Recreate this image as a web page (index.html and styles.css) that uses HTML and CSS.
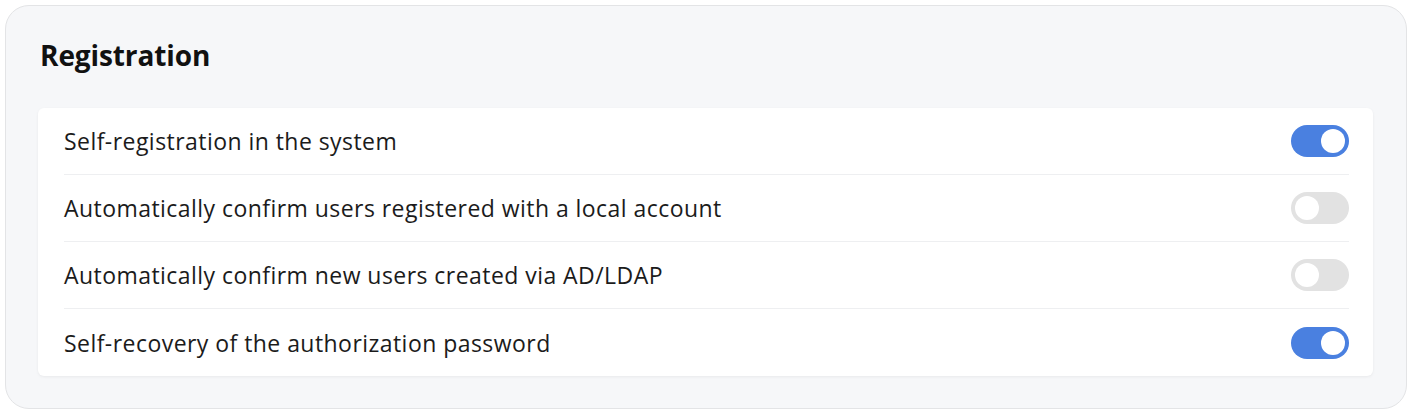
FILE: index.html
```html
<!DOCTYPE html>
<html>
<head>
<meta charset="utf-8">
<link rel="stylesheet" href="styles.css">
</head>
<body>
<section class="panel">
  <h2 class="panel-title">Registration</h2>
  <div class="list">
    <div class="row"><span class="label">Self-registration in the system</span><span class="toggle on"><span class="knob"></span></span></div>
    <div class="row"><span class="label">Automatically confirm users registered with a local account</span><span class="toggle"><span class="knob"></span></span></div>
    <div class="row"><span class="label">Automatically confirm new users created via AD/LDAP</span><span class="toggle"><span class="knob"></span></span></div>
    <div class="row"><span class="label">Self-recovery of the authorization password</span><span class="toggle on"><span class="knob"></span></span></div>
  </div>
</section>
</body>
</html>
```
FILE: styles.css
```css
html, body { margin: 0; padding: 0; background: #ffffff; }
body { padding: 5px; font-family: "Open Sans", "Noto Sans", sans-serif; color: #1b1b1b; }
.panel {
  box-sizing: border-box;
  width: 1402px;
  height: 404px;
  background: #f6f7f9;
  border: 1px solid #e3e4e6;
  border-radius: 24px;
  padding: 33px 33px 32px 32px;
  display: flex;
  flex-direction: column;
}
.panel-title {
  margin: 0 0 37px 2px;
  font-size: 28px;
  line-height: 32px;
  font-weight: 700;
  letter-spacing: -0.1px;
  color: #111;
}
.list {
  background: #fff;
  border-radius: 6px;
  box-shadow: 0 1px 3px rgba(0,0,0,0.06);
  padding: 0 24px 0 26px;
}
.row {
  height: 67px;
  display: flex;
  align-items: center;
  justify-content: space-between;
  border-bottom: 1px solid #eeeff1;
  box-sizing: border-box;
}
.row:last-child { border-bottom: none; height: 67px; }
.label { font-size: 23px; letter-spacing: 0.45px; color: #1b1b1b; }
.toggle {
  width: 58px;
  height: 32px;
  border-radius: 16px;
  background: #e2e2e2;
  display: flex;
  align-items: center;
  padding: 0 4px;
  box-sizing: border-box;
}
.toggle.on { background: #4a80e0; justify-content: flex-end; }
.knob { width: 24px; height: 24px; border-radius: 50%; background: #fff; }
```
